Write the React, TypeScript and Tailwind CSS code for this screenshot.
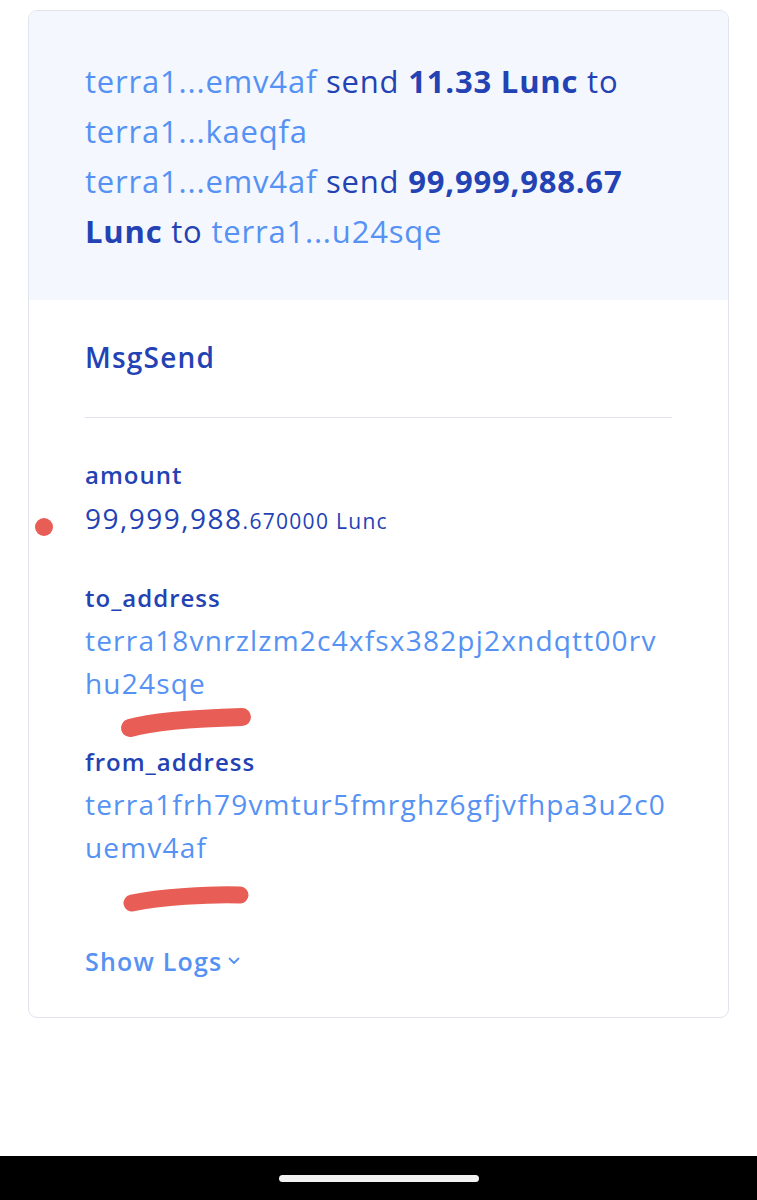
import React from 'react';

const font = { fontFamily: '"Open Sans", Lato, sans-serif' };

function Addr({ children }: { children: React.ReactNode }) {
  return <span className="text-[#5592f3]">{children}</span>;
}

function Amount({ children }: { children: React.ReactNode }) {
  return <span className="font-bold text-[#2342b4]">{children}</span>;
}

function Field({ label, children, className = '' }: { label: string; children: React.ReactNode; className?: string }) {
  return (
    <div className={className}>
      <div className="text-[24px] leading-[28px] tracking-[1px] font-semibold text-[#2342b4]">{label}</div>
      {children}
    </div>
  );
}

export default function App() {
  return (
    <div className="relative w-[757px] h-[1200px] bg-white flex flex-col" style={font}>
      <div className="pt-[10px] px-[28px] flex-1">
        <div className="rounded-[9px] border border-[#e1e4ec] overflow-hidden bg-white">
          <div className="bg-[#f4f7fd] px-[56px] pt-[45px] pb-[44px] text-[31px] leading-[50px] tracking-[0.8px] text-[#2342b4]">
            <div>
              <Addr>terra1...emv4af</Addr> <span>send</span> <Amount>11.33</Amount> <Amount>Lunc</Amount>{' '}
              <span>to</span> <Addr>terra1...kaeqfa</Addr>
            </div>
            <div>
              <Addr>terra1...emv4af</Addr> <span>send</span> <Amount>99,999,988.67</Amount> <Amount>Lunc</Amount>{' '}
              <span>to</span> <Addr>terra1...u24sqe</Addr>
            </div>
          </div>

          <div className="px-[56px] pt-[41px] pb-[41px]">
            <div className="text-[28px] leading-[32px] tracking-[1.2px] font-semibold text-[#2342b4]">MsgSend</div>
            <div className="mt-[44px] border-t border-[#dfe2ea]" />

            <Field label="amount" className="mt-[43px]">
              <div className="mt-[11px] text-[28px] leading-[36px] tracking-[1.5px] text-[#2342b4]">
                99,999,988<span className="text-[21px] tracking-[1.3px]">.670000 Lunc</span>
              </div>
            </Field>

            <Field label="to_address" className="mt-[45px]">
              <div className="mt-[7px] text-[28px] leading-[43px] tracking-[1.2px] text-[#5592f3] break-all">
                terra18vnrzlzm2c4xfsx382pj2xndqtt00rvhu24sqe
              </div>
            </Field>

            <Field label="from_address" className="mt-[43px]">
              <div className="mt-[7px] text-[28px] leading-[43px] tracking-[1.2px] text-[#5592f3] break-all">
                terra1frh79vmtur5fmrghz6gfjvfhpa3u2c0uemv4af
              </div>
            </Field>

            <button className="mt-[77px] flex items-center gap-[6px] text-[25px] leading-[30px] tracking-[1.2px] font-semibold text-[#5592f3]">
              Show Logs
              <svg width="12" height="8" viewBox="0 0 12 8" fill="none">
                <path d="M1.5 1.5 L6 6 L10.5 1.5" stroke="#5592f3" strokeWidth="1.8" strokeLinecap="round" strokeLinejoin="round" />
              </svg>
            </button>
          </div>
        </div>
      </div>

      <div className="h-[44px] bg-black flex items-center justify-center">
        <div className="w-[200px] h-[7px] rounded-full bg-[#f2f2f2]" />
      </div>

      {/* hand-drawn red annotations */}
      <div className="absolute left-[35px] top-[518px] w-[18px] h-[18px] rounded-full bg-[#e85d55]" />
      <svg className="absolute left-[118px] top-[706px]" width="138" height="34" viewBox="0 0 138 34">
        <path d="M12 22 C40 14 90 12 124 11" stroke="#e85d55" strokeWidth="18" strokeLinecap="round" fill="none" />
      </svg>
      <svg className="absolute left-[120px] top-[882px]" width="134" height="34" viewBox="0 0 134 34">
        <path d="M12 21 C40 15 90 12 120 13" stroke="#e85d55" strokeWidth="17" strokeLinecap="round" fill="none" />
      </svg>
    </div>
  );
}
